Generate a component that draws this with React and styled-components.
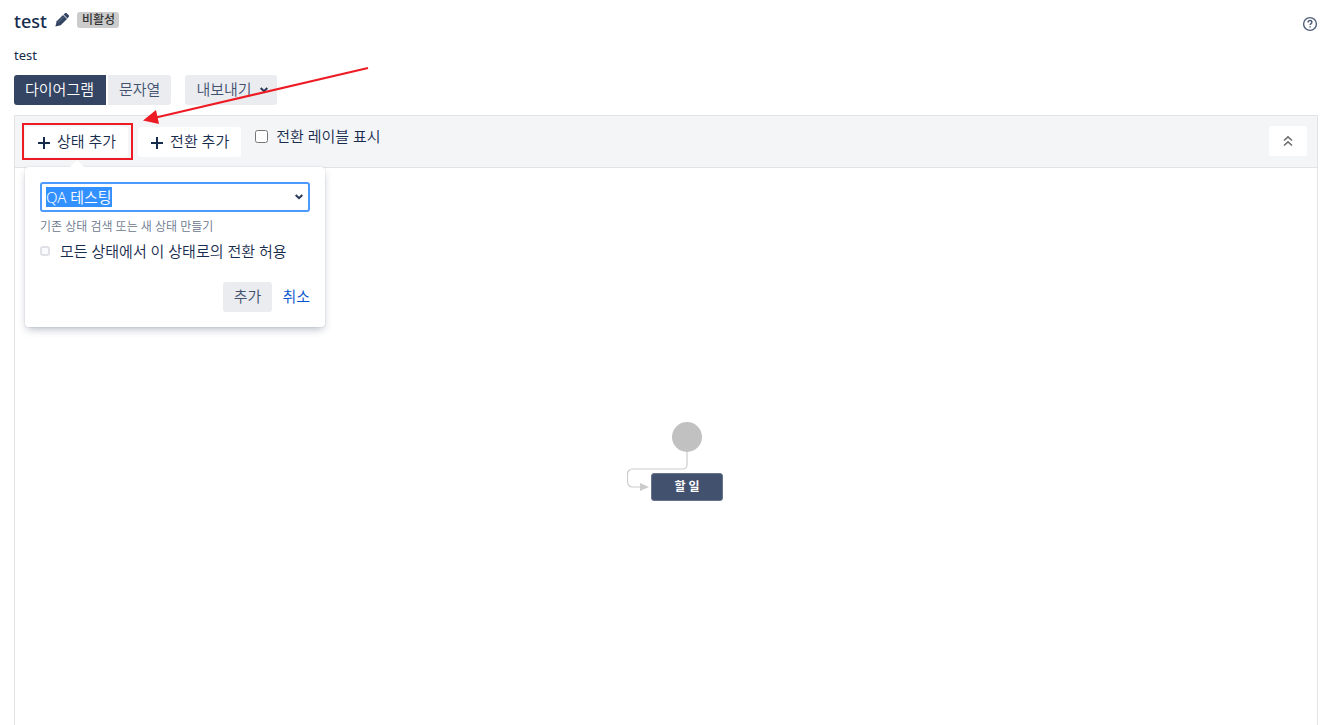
import React from "react";
import styled, { createGlobalStyle } from "styled-components";

const App = () => {
  const [label, setLabel] = React.useState(false);
  const [allow, setAllow] = React.useState(false);
  const [status, setStatus] = React.useState("QA 테스팅");
  const statusRef = React.useRef(null);

  React.useEffect(() => {
    statusRef.current.focus();
    statusRef.current.select();
  }, []);

  return (
    <Page>
      <GlobalStyle />
      <Header>
        <TitleHold>
          <h1>test</h1>
          <IconButton aria-label="이름 편집">
            <svg width="14" height="14" viewBox="0 0 14 14" fill="#344563">
              <path d="M1.7 8.3 8 2 12 6 5.7 12.3 0.4 13.6z" />
              <path d="M8.6 1.6 9.7.5a1.6 1.6 0 0 1 2.3 0l1.5 1.5a1.6 1.6 0 0 1 0 2.3l-1.1 1.1z" />
              <path d="M3.200 9.3 8.6 3.9" stroke="#8993a4" strokeWidth=".6" />
            </svg>
          </IconButton>
          <Badge>비활성</Badge>
        </TitleHold>
        <HelpLink href="#help" aria-label="도움말">
          <svg width="16" height="16" viewBox="0 0 16 16" fill="none" stroke="#505f79">
            <circle cx="8" cy="8" r="6.4" strokeWidth="1.4" />
            <path d="M6.1 6.4c0-1.1.8-1.8 1.9-1.8s1.9.7 1.9 1.7c0 1.3-1.8 1.3-1.8 2.7" strokeWidth="1.5" />
            <path d="M8.1 10.2v1.4" strokeWidth="1.5" />
          </svg>
        </HelpLink>
      </Header>
      <Description>test</Description>

      <Tabs>
        <Tab $active $side="left">다이어그램</Tab>
        <Tab $side="right">문자열</Tab>
        <ExportButton>
          내보내기
          <Chevron />
        </ExportButton>
      </Tabs>

      <Editor>
        <Toolbar>
          <Tools>
            <AddHold>
              <ToolButton>
                <Plus />
                상태 추가
              </ToolButton>
              <Highlight />
              <Popup>
                <Field>
                  <StatusInput
                    ref={statusRef}
                    aria-label="상태"
                    value={status}
                    onChange={(e) => setStatus(e.target.value)}
                  />
                  <Chevron />
                </Field>
                <Hint>기존 상태 검색 또는 새 상태 만들기</Hint>
                <AllowLabel>
                  <AllowBox
                    type="checkbox"
                    checked={allow}
                    onChange={() => setAllow(!allow)}
                  />
                  모든 상태에서 이 상태로의 전환 허용
                </AllowLabel>
                <Actions>
                  <SubmitButton>추가</SubmitButton>
                  <a href="#cancel">취소</a>
                </Actions>
              </Popup>
            </AddHold>
            <ToolButton>
              <Plus />
              전환 추가
            </ToolButton>
            <ShowLabel>
              <input
                type="checkbox"
                checked={label}
                onChange={() => setLabel(!label)}
              />
              전환 레이블 표시
            </ShowLabel>
          </Tools>
          <CollapseButton aria-label="접기">
            <svg width="10" height="12" viewBox="0 0 10 12" fill="none" stroke="#707070" strokeWidth="1.6">
              <path d="M1 5.5 5 1.8 9 5.5" />
              <path d="M1 10.5 5 6.8 9 10.5" />
            </svg>
          </CollapseButton>
        </Toolbar>
        <Canvas>
          <Diagram>
            <svg width="96" height="80" viewBox="0 0 96 80">
              <circle cx="60" cy="15" r="15" fill="#c1c1c1" />
              <path
                d="M60 30V43a4 4 0 0 1-4 4H5.500a5 5 0 0 0-5 5V60a5 5 0 0 0 5 5H14"
                fill="none"
                stroke="#ccc"
                strokeWidth="1.2"
              />
              <path d="M13 61 22 65 13 69z" fill="#ccc" />
            </svg>
            <StatusNode>할 일</StatusNode>
          </Diagram>
        </Canvas>
      </Editor>

      <Arrow width="230" height="60" viewBox="0 0 230 60">
        <path d="M228 3 16 52.500" stroke="#ed1c24" strokeWidth="2" fill="none" />
        <path d="M3 55.500 16 45 19 59z" fill="#ed1c24" />
      </Arrow>
    </Page>
  );
};

const Plus = () => (
  <svg width="12" height="12" viewBox="0 0 12 12" stroke="#172b4d" strokeWidth="2">
    <path d="M6 0V12M0 6H12" />
  </svg>
);

const Chevron = () => (
  <svg width="8" height="6" viewBox="0 0 8 6" fill="none" stroke="#253858" strokeWidth="2">
    <path d="M.7 1 4 4.200 7.300 1" />
  </svg>
);

export default App;

const GlobalStyle = createGlobalStyle`
  * {
    box-sizing: border-box;
  }
  body {
    margin: 0;
    background: #fff;
    color: #172b4d;
    font-family: "Noto Sans", "Noto Sans CJK KR", sans-serif;
    font-size: 15px;
    font-weight: 350;
    line-height: 20px;
  }
  button, input {
    font: inherit;
    color: inherit;
  }
  button {
    border: 0;
    cursor: pointer;
  }
  svg {
    display: block;
    flex: none;
  }
`;

const Page = styled.div`
  position: relative;
  min-height: 100vh;
  padding: 8px 12px 0 14px;
  display: flex;
  flex-direction: column;
  overflow: hidden;
`;

const Header = styled.div`
  display: flex;
  justify-content: space-between;
  align-items: flex-start;
`;

const TitleHold = styled.div`
  display: flex;
  align-items: flex-start;

  h1 {
    margin: 0;
    font-size: 18px;
    font-weight: 500;
    line-height: 26px;
  }
`;

const IconButton = styled.button`
  padding: 0;
  margin: 5px 8px 0;
  background: none;
`;

const Badge = styled.span`
  margin-top: 4px;
  padding: 0 4px 0 5px;
  height: 16px;
  border-radius: 3px;
  background: #ccc;
  color: #333;
  font-size: 12px;
  font-weight: 500;
  line-height: 16px;
`;

const HelpLink = styled.a`
  margin-top: 8px;
`;

const Description = styled.p`
  margin: 11px 0 10px;
  font-size: 13px;
  font-weight: 400;
`;

const Tabs = styled.div`
  display: flex;
  margin-bottom: 10px;
`;

const Tab = styled.button`
  height: 30px;
  padding: ${({ $side }) => ($side === "left" ? "0 12px 2px 11px" : "0 11px 2px")};
  margin-right: ${({ $side }) => ($side === "left" ? "2px" : "14px")};
  border-radius: ${({ $side }) => ($side === "left" ? "3px 0 0 3px" : "0 3px 3px 0")};
  background: ${({ $active }) => ($active ? "#344563" : "#ebecf0")};
  color: ${({ $active }) => ($active ? "#fff" : "#42526e")};
`;

const ExportButton = styled.button`
  display: flex;
  align-items: center;
  gap: 8px;
  height: 30px;
  padding: 0 9px 2px 11px;
  border-radius: 3px;
  background: #ebecf0;
  color: #42526e;

  svg {
    margin-top: 2px;
  }
`;

const Editor = styled.div`
  flex: 1;
  display: flex;
  flex-direction: column;
  border: 1px solid #e2e3e5;
  border-bottom: 0;
`;

const Toolbar = styled.div`
  display: flex;
  justify-content: space-between;
  align-items: flex-start;
  padding: 10px;
  border-bottom: 1px solid #e2e3e5;
  background: #f4f5f7;
`;

const Tools = styled.div`
  display: flex;
  align-items: flex-start;
  gap: 10px;
  padding-top: 1px;
`;

const AddHold = styled.div`
  position: relative;
`;

const ToolButton = styled.button`
  display: flex;
  align-items: center;
  gap: 7px;
  height: 30px;
  padding: 0 12px 2px 13px;
  border-radius: 3px;
  background: #fff;

  svg {
    margin-top: 3px;
  }
`;

/* red frame round the add button */
const Highlight = styled.div`
  position: absolute;
  top: -4px;
  left: -3px;
  right: -5px;
  bottom: -3px;
  border: 2px solid #ed1c24;
  pointer-events: none;
`;

const Popup = styled.div`
  position: absolute;
  z-index: 1;
  top: 40px;
  left: 0;
  width: 300px;
  padding: 15px;
  border-radius: 3px;
  background: #fff;
  box-shadow: 0 4px 8px -2px rgba(9, 30, 66, 0.31), 0 0 1px rgba(9, 30, 66, 0.31);

  &::before {
    content: "";
    position: absolute;
    top: -7px;
    left: 45px;
    border: solid transparent;
    border-width: 0 7px 7px;
    border-bottom-color: #fff;
  }
`;

const Field = styled.div`
  display: flex;
  align-items: center;
  height: 30px;
  padding: 0 5px 0 4px;
  border: 2px solid #4c9aff;
  border-radius: 3px;
`;

const StatusInput = styled.input`
  flex: 1;
  min-width: 0;
  height: 20px;
  padding: 0;
  border: 0;
  outline: 0;
  background: none;

  &::selection {
    background: #3390ff;
    color: #fff;
  }
`;

const Hint = styled.div`
  margin-top: 5px;
  color: #6b778c;
  font-size: 12px;
`;

const AllowLabel = styled.label`
  display: flex;
  align-items: center;
  gap: 10px;
  margin-top: 4px;
`;

const AllowBox = styled.input`
  appearance: none;
  width: 10px;
  height: 10px;
  margin: 0;
  border: 2px solid #dfe1e6;
  border-radius: 3px;
  background: #fafbfc;

  &:checked {
    background: #0052cc;
  }
`;

const Actions = styled.div`
  display: flex;
  justify-content: flex-end;
  align-items: center;
  gap: 10px;
  margin-top: 21px;

  a {
    padding-bottom: 2px;
    color: #0052cc;
    text-decoration: none;
  }
`;

const SubmitButton = styled.button`
  height: 30px;
  padding: 0 11px 2px;
  border-radius: 3px;
  background: #ebecf0;
  color: #42526e;
`;

const ShowLabel = styled.label`
  display: flex;
  align-items: center;
  gap: 8px;
  margin-left: 4px;
  line-height: 18px;

  input {
    width: 13px;
    height: 13px;
    margin: 0;
  }
`;

const CollapseButton = styled.button`
  display: flex;
  align-items: center;
  justify-content: center;
  width: 38px;
  height: 30px;
  border-radius: 3px;
  background: #fff;
`;

const Canvas = styled.div`
  position: relative;
  flex: 1;
  min-height: 360px;
`;

const Diagram = styled.div`
  position: absolute;
  top: 254px;
  left: calc(50% - 39px);
`;

const StatusNode = styled.div`
  position: absolute;
  top: 51px;
  left: 24px;
  width: 72px;
  height: 28px;
  border: 1px solid #66738a;
  border-radius: 3px;
  background: #42526e;
  color: #fff;
  font-size: 12px;
  font-weight: 700;
  line-height: 26px;
  text-align: center;
`;

const Arrow = styled.svg`
  position: absolute;
  z-index: 2;
  top: 65px;
  left: 140px;
  pointer-events: none;
`;
